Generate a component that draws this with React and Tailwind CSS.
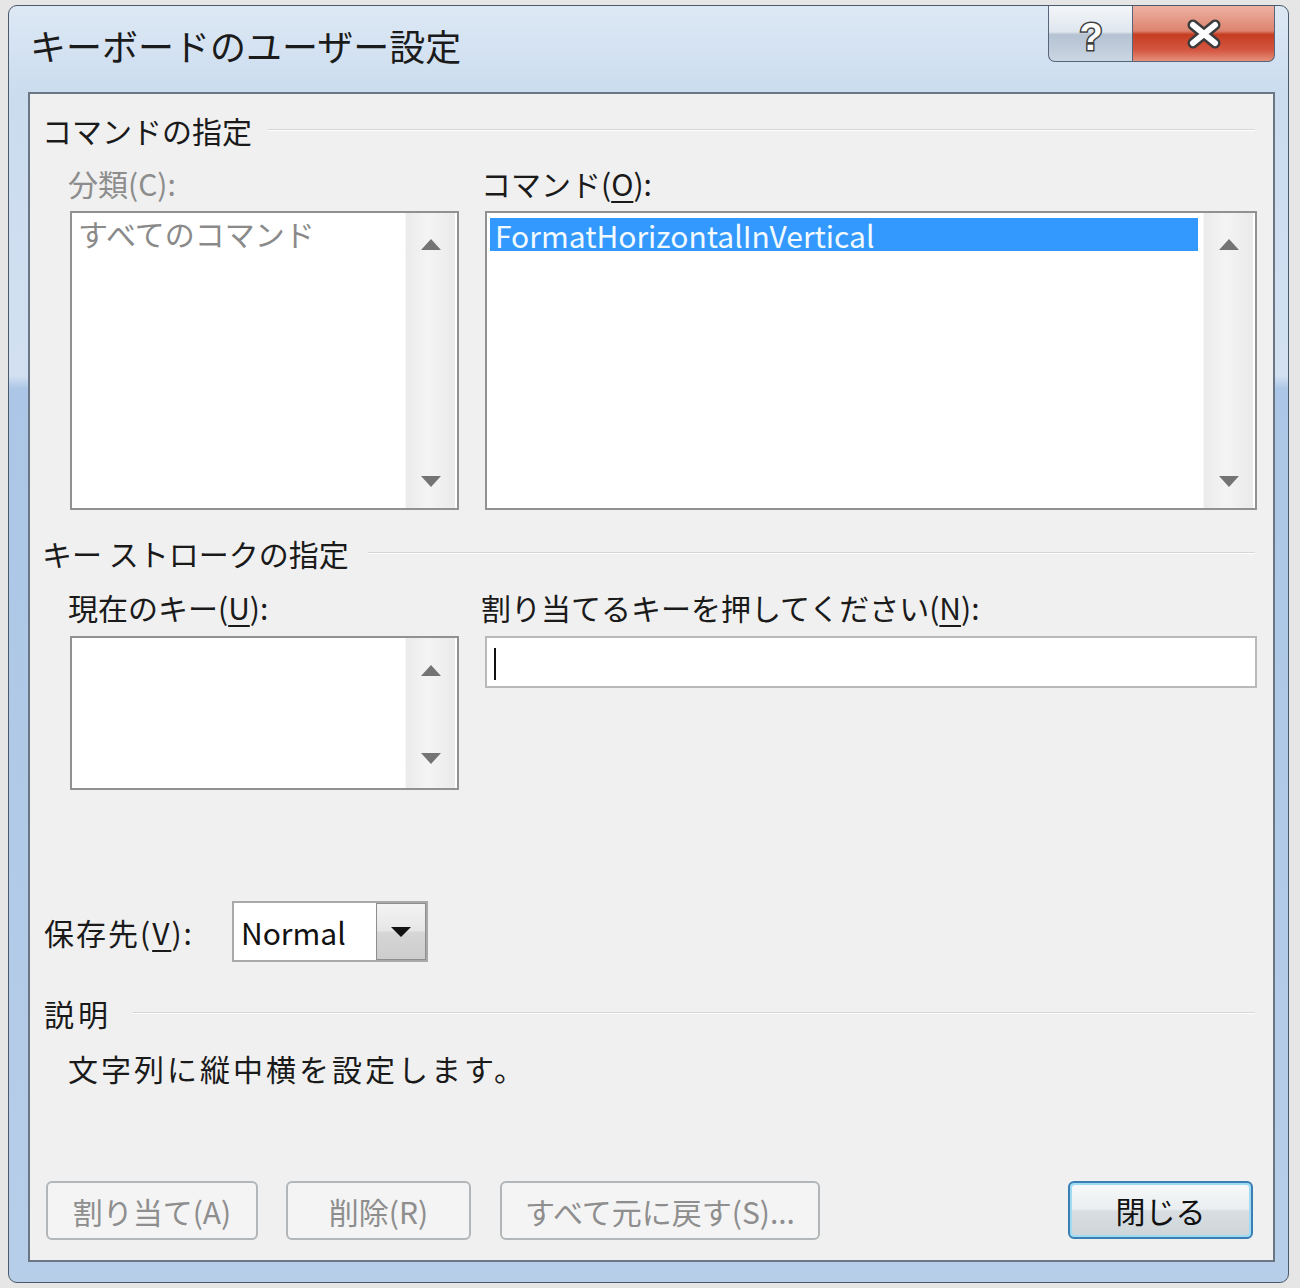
import React from 'react'

const font = "font-['Noto_Sans_CJK_JP','Liberation_Sans',sans-serif]"

function Tri({ down }) {
  return (
    <svg width="20" height="11" viewBox="0 0 20 11">
      <polygon points={down ? '0,0 20,0 10,11' : '0,11 20,11 10,0'} fill="#747474" />
    </svg>
  )
}

function ScrollTrack({ upH = 62, downH = 56 }) {
  return (
    <div className="w-[50px] h-full mr-[2px] bg-[linear-gradient(to_right,#ebebeb,#f4f4f4_45%,#eaeaea)] border-l border-[#f8f8f8] flex flex-col justify-between">
      <div className="flex items-center justify-center" style={{ height: upH }}>
        <Tri />
      </div>
      <div className="flex items-center justify-center" style={{ height: downH }}>
        <Tri down />
      </div>
    </div>
  )
}

function GroupLabel({ text, gap }) {
  return (
    <div className="h-[40px] flex items-center pl-[12px] pr-[18px]">
      <span className="text-[30px] leading-none text-[#1a1a1a] whitespace-pre">{text}</span>
      <div className={`flex-1 h-[2px] border-t border-[#d6d6d6] bg-white ${gap}`} />
    </div>
  )
}

function Mn({ children }) {
  return <span className="underline underline-offset-[5px] decoration-[2px]">{children}</span>
}

function DisabledButton({ w, children }) {
  return (
    <div className={`${w} h-[59px] rounded-[6px] border-2 border-[#b3b6b8] bg-[#f4f4f4] flex items-center justify-center text-[30px] leading-none text-[#8e8e8e]`}>
      {children}
    </div>
  )
}

export default function App() {
  return (
    <div className={`w-[1300px] h-[1288px] bg-[#e6e6e6] pt-[5px] pl-[8px] ${font}`}>
      <div className="w-[1281px] h-[1278px] rounded-[9px] border border-[#4b5a6b] bg-[linear-gradient(to_bottom,#dde8f4_0%,#cbdcef_7%,#d2e0f1_29%,#abc6e6_30%,#b7cee9_100%)] flex flex-col">
        {/* title bar */}
        <div className="h-[86px] flex items-start justify-between">
          <div className="pl-[21px] pt-[19px] text-[36px] leading-[40px] text-[#1b1b1b]">キーボードのユーザー設定</div>
          <div className="flex mr-[13px]">
            <div className="w-[85px] h-[56px] rounded-bl-[7px] border border-t-0 border-[#56657a] bg-[linear-gradient(to_bottom,#f3f6f9_0%,#dfe6ee_47%,#b5c2d2_52%,#cbd6e3_100%)] flex items-center justify-center">
              <svg width="30" height="46" viewBox="0 0 30 46">
                <text x="15" y="39" textAnchor="middle" fontSize="38" fontWeight="700" fontFamily="Liberation Sans, sans-serif" fill="#ffffff" stroke="#3f3f3f" strokeWidth="3" paintOrder="stroke">?</text>
              </svg>
            </div>
            <div className="w-[142px] h-[56px] rounded-br-[7px] border border-t-0 border-l-0 border-[#56657a] bg-[linear-gradient(to_bottom,#eeb1a2_0%,#dd8470_45%,#c53d22_52%,#d45640_80%,#e5907b_100%)] flex items-center justify-center">
              <svg width="40" height="32" viewBox="0 0 40 32">
                <path d="M9 7 L31 25 M31 7 L9 25" stroke="#3c3c3c" strokeWidth="11" strokeLinecap="round" />
                <path d="M9 7 L31 25 M31 7 L9 25" stroke="#ffffff" strokeWidth="6" strokeLinecap="round" />
              </svg>
            </div>
          </div>
        </div>

        {/* client area */}
        <div className="ml-[19px] mr-[13px] h-[1170px] border-2 border-[#6b7684] bg-[#f0f0f0] flex flex-col">
          <div className="mt-[16px]">
            <GroupLabel text="コマンドの指定" gap="ml-[16px]" />
          </div>

          <div className="mt-[13px] h-[40px] flex pl-[40px] gap-[26px] items-center text-[30px] leading-none">
            <div className="w-[389px] -ml-[2px] text-[#8d8d8d]">分類(C):</div>
            <div className="w-[772px] -ml-[2px] text-[#1a1a1a]">コマンド(<Mn>O</Mn>):</div>
          </div>

          <div className="mt-[8px] h-[299px] flex pl-[40px] gap-[26px]">
            <div className="w-[389px] h-full border-2 border-[#919191] bg-white flex">
              <div className="flex-1 pl-[6px] pt-[2px] text-[30px] leading-[36px] text-[#8a8a8a]">すべてのコマンド</div>
              <ScrollTrack upH={62} downH={54} />
            </div>
            <div className="w-[772px] h-full border-2 border-[#919191] bg-white flex">
              <div className="flex-1 pl-[3px] pt-[5px] pr-[5px]">
                <div className="h-[33px] bg-[#3399ff] pl-[5px] flex items-center text-[30px] leading-none text-[#f2faff]">FormatHorizontalInVertical</div>
              </div>
              <ScrollTrack upH={62} downH={54} />
            </div>
          </div>

          <div className="mt-[23px]">
            <GroupLabel text="キー ストロークの指定" gap="ml-[19px]" />
          </div>

          <div className="mt-[14px] h-[40px] flex pl-[40px] gap-[26px] items-center text-[30px] leading-none text-[#1a1a1a]">
            <div className="w-[389px] -ml-[2px]">現在のキー(<Mn>U</Mn>):</div>
            <div className="w-[772px] -ml-[2px]">割り当てるキーを押してください(<Mn>N</Mn>):</div>
          </div>

          <div className="mt-[9px] h-[154px] flex pl-[40px] gap-[26px] items-start">
            <div className="w-[389px] h-full border-2 border-[#919191] bg-white flex">
              <div className="flex-1" />
              <ScrollTrack upH={64} downH={60} />
            </div>
            <div className="w-[772px] h-[52px] border-2 border-[#b9b9b9] bg-white pl-[7px] pt-[10px]">
              <div className="w-[2px] h-[32px] bg-[#111111]" />
            </div>
          </div>

          <div className="mt-[111px] h-[61px] flex items-center pl-[14px]">
            <div className="w-[188px] text-[30px] leading-none text-[#1a1a1a] tracking-[2px]">保存先(<Mn>V</Mn>):</div>
            <div className="w-[196px] h-full border-2 border-[#a9a9a9] bg-white flex">
              <div className="flex-1 pl-[7px] flex items-center text-[30px] leading-none text-[#111111]">Normal</div>
              <div className="w-[50px] h-full border border-[#8e8e8e] bg-[linear-gradient(to_bottom,#f4f4f4_0%,#e6e6e6_48%,#d6d6d6_52%,#cdcdcd_100%)] flex items-center justify-center">
                <svg width="20" height="10" viewBox="0 0 20 10">
                  <polygon points="0,0 20,0 10,10" fill="#111111" />
                </svg>
              </div>
            </div>
          </div>

          <div className="mt-[31px] h-[40px] flex items-center pl-[14px] pr-[18px]">
            <span className="text-[30px] leading-none text-[#1a1a1a] tracking-[4px]">説明</span>
            <div className="flex-1 ml-[21px] h-[2px] border-t border-[#d6d6d6] bg-white" />
          </div>

          <div className="mt-[15px] h-[40px] flex items-center pl-[38px] text-[30px] leading-none text-[#1a1a1a] tracking-[3px]">
            文字列に縦中横を設定します。
          </div>

          <div className="mt-[93px] h-[59px] flex pl-[16px] pr-[20px]">
            <DisabledButton w="w-[212px]">割り当て(A)</DisabledButton>
            <div className="ml-[28px]">
              <DisabledButton w="w-[185px]">削除(R)</DisabledButton>
            </div>
            <div className="ml-[29px]">
              <DisabledButton w="w-[320px]">すべて元に戻す(S)...</DisabledButton>
            </div>
            <div className="ml-auto w-[185px] h-[58px] rounded-[6px] border-2 border-[#3a7eb3] p-[2px] bg-[#9fdcf3]">
              <div className="w-full h-full rounded-[3px] bg-[linear-gradient(to_bottom,#f6f8f9_0%,#eaeef0_48%,#d8dee2_52%,#cfd6da_100%)] flex items-center justify-center text-[30px] leading-none text-[#111111]">
                閉じる
              </div>
            </div>
          </div>
        </div>
      </div>
    </div>
  )
}
